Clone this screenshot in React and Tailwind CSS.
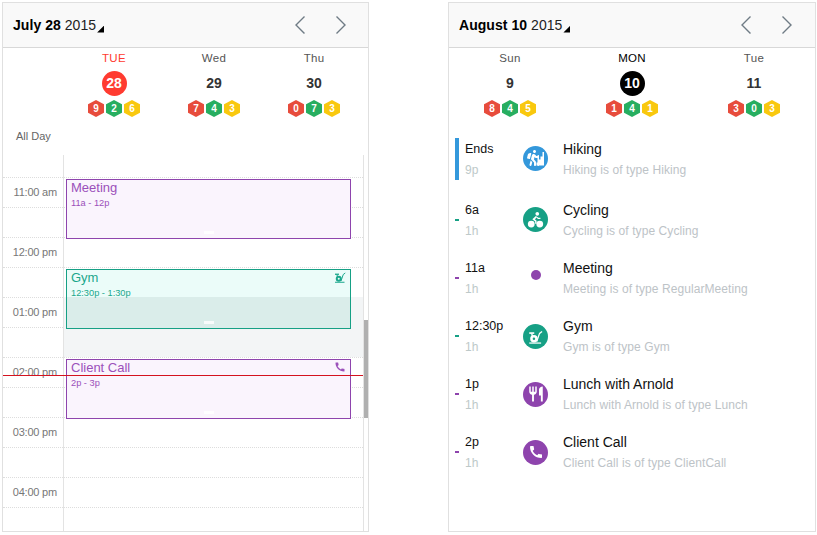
import { FaHiking } from "react-icons/fa";
import { MdCall, MdRestaurant } from "react-icons/md";

const leftDays = [
  { name: "TUE", num: 28, counts: [9, 2, 6], today: "bg-[#ff3b30]", label: "text-[#ff3b30]" },
  { name: "Wed", num: 29, counts: [7, 4, 3] },
  { name: "Thu", num: 30, counts: [0, 7, 3] },
];

const rightDays = [
  { name: "Sun", num: 9, counts: [8, 4, 5] },
  { name: "MON", num: 10, counts: [1, 4, 1], today: "bg-black", label: "text-black" },
  { name: "Tue", num: 11, counts: [3, 0, 3] },
];

const hexColors = ["bg-[#e74c3c]", "bg-[#27ae60]", "bg-[#f9c80e]"];

const hours = [
  "", "11:00 am", "", "12:00 pm", "", "01:00 pm", "", "02:00 pm", "", "03:00 pm", "", "04:00 pm", "", "",
];

function GymBike({ className }) {
  return (
    <svg viewBox="0 0 24 24" className={className} fill="none" stroke="currentColor">
      <path d="M2 22.5h19" strokeWidth="2" />
      <path d="M2 6.5h8" strokeWidth="2.6" />
      <path d="M6 7l1 5" strokeWidth="2.2" />
      <path d="M14 20l4.5-13 4-3" strokeWidth="2" />
      <path d="M9.5 9.5a6 6 0 1 1 0 12a6 6 0 1 1 0-12z M9.5 13.5a2 2 0 1 0 0 4a2 2 0 1 0 0-4z" fill="currentColor" fillRule="evenodd" stroke="none" />
    </svg>
  );
}

function CyclistIcon({ className }) {
  return (
    <svg viewBox="0 0 24 24" className={className} fill="currentColor">
      <circle cx="14.5" cy="4" r="2.6" />
      <path d="M12.5 7l-5 4.5 4 3.2v3.3h2v-4.4l-2.4-2 2.6-2.4 1.6 2h3.7V9.4h-2.8z" />
      <circle cx="6" cy="18.5" r="4.8" />
      <circle cx="18" cy="18.5" r="4.8" />
    </svg>
  );
}

function HikingStairs() {
  return (
    <svg viewBox="0 0 25 25" className="w-[25px] h-[25px]" fill="white">
      <path d="M13.5 19.5v-3h2v-3h2v-3h2V6h1.5v13.5z" />
    </svg>
  );
}

function Hex({ value, color }) {
  return (
    <div
      className={`w-4 h-[17px] flex items-center justify-center text-white text-[10px] font-bold ${color} [clip-path:polygon(50%_0,100%_25%,100%_75%,50%_100%,0_75%,0_25%)]`}
    >
      {value}
    </div>
  );
}

function DayColumn({ day }) {
  return (
    <div className="flex flex-col items-center">
      <div className={`mt-[3px] h-[14px] leading-[14px] text-[11.5px] tracking-[0.3px] ${day.label || "text-[#555]"}`}>{day.name}</div>
      <div
        className={`mt-[6px] w-[25px] h-[25px] rounded-full flex items-center justify-center text-[14px] font-bold ${
          day.today ? `${day.today} text-white` : "text-[#333]"
        }`}
      >
        {day.num}
      </div>
      <div className="mt-[4px] flex gap-[2px]">
        {day.counts.map((c, i) => (
          <Hex key={i} value={c} color={hexColors[i]} />
        ))}
      </div>
    </div>
  );
}

function Header({ bold, year, arrows }) {
  return (
    <div className="h-[45px] shrink-0 flex items-center bg-[#f9f9f9] border-b border-[#d8d8d8]">
      <div className="relative ml-[10px] text-[14px] tracking-[0.05px] text-[#222]">
        <span className="font-bold text-black">{bold}</span> {year}
        <span className="absolute left-[100%] ml-[1px] top-[11px] w-[7px] h-[7px] bg-black [clip-path:polygon(100%_0,100%_100%,0_100%)]" />
      </div>
      <div className={`ml-auto flex gap-[31px] text-[#6f7b85] ${arrows}`}>
        <svg viewBox="0 0 10 18" className="w-[10px] h-[18px]" fill="none" stroke="currentColor" strokeWidth="1.4">
          <path d="M9.5 .5L1 9l8.5 8.5" />
        </svg>
        <svg viewBox="0 0 10 18" className="w-[10px] h-[18px]" fill="none" stroke="currentColor" strokeWidth="1.4">
          <path d="M.5 .5L9 9 .5 17.5" />
        </svg>
      </div>
    </div>
  );
}

function CalEvent({ title, time, border, bg, text, top, icon, shade }) {
  return (
    <div className={`absolute left-[63px] w-[285px] h-[60px] border overflow-hidden ${border} ${bg} ${top}`}>
      {shade && <div className={`absolute left-0 right-0 top-[27px] bottom-0 ${shade}`} />}
      <div className={`relative pl-[4px] ${text}`}>
        <div className="text-[13px] leading-[16px]">{title}</div>
        <div className="mt-[1px] text-[9.25px] leading-[12px]">{time}</div>
      </div>
      {icon && <div className={`absolute right-[4px] top-[1px] ${text}`}>{icon}</div>}
      <div className="absolute left-[137px] bottom-[4px] w-[10px] h-[3px] bg-white/80" />
    </div>
  );
}

function DayPanel() {
  return (
    <div className="w-[367px] h-[530px] flex flex-col border border-[#e0e0e0]">
      <Header bold="July 28" year="2015" arrows="mr-[22px]" />
      <div className="h-[107px] shrink-0 flex">
        <div className="w-[61px] flex items-end pl-[13px] pb-[12px] text-[11px] leading-[14px] text-[#666]">All Day</div>
        {leftDays.map((d) => (
          <div key={d.name} className="w-[100px]">
            <DayColumn day={d} />
          </div>
        ))}
      </div>
      <div className="relative flex-1 overflow-hidden">
        {hours.map((h, i) => (
          <div
            key={i}
            className={`flex w-[360px] border-b border-dotted border-[#ddd] ${
              i === 0 || i === hours.length - 1 ? "h-[23px]" : "h-[30px]"
            }`}
          >
            <div className="w-[60px] pr-[6px] text-right text-[11px] leading-[29px] text-[#777] tracking-[-0.2px]">{h}</div>
          </div>
        ))}
        <div className="absolute left-[60px] top-0 bottom-0 border-l border-[#e3e3e3]" />
        <div className="absolute left-[360px] top-0 bottom-0 border-l border-[#e3e3e3]" />
        <div className="absolute left-[61px] w-[299px] top-[142px] h-[60px] bg-[#f3f5f6]" />
        <CalEvent
          title="Meeting"
          time="11a - 12p"
          top="top-[24px]"
          border="border-[#8e44ad]"
          bg="bg-[#faf4fd]"
          text="text-[#9b50ba]"
        />
        <CalEvent
          title="Gym"
          time="12:30p - 1:30p"
          top="top-[114px]"
          border="border-[#16a085]"
          bg="bg-[#ebfcf9]"
          text="text-[#1aa78c]"
          shade="bg-[#daedea]"
          icon={<GymBike className="w-[12px] h-[12px]" />}
        />
        <CalEvent
          title="Client Call"
          time="2p - 3p"
          top="top-[204px]"
          border="border-[#8e44ad]"
          bg="bg-[#faf4fd]"
          text="text-[#9b50ba]"
          icon={<MdCall className="w-[12px] h-[12px]" />}
        />
        <div className="absolute left-0 w-[360px] top-[220px] h-px bg-[#d4121f]" />
        <div className="absolute left-[361px] w-[4px] top-[165px] h-[98px] bg-[#b0b0b0]" />
      </div>
    </div>
  );
}

const agenda = [
  {
    start: "Ends", dur: "9p", title: "Hiking", sub: "Hiking is of type Hiking", bar: "h-[42px] w-[4px] bg-[#3498db]", circle: "bg-[#3498db]", icon: (
      <div className="relative w-[25px] h-[25px] flex items-center justify-center">
        <FaHiking className="w-[14px] h-[16px] mr-[5px] text-white" />
        <div className="absolute inset-0"><HikingStairs /></div>
      </div>
    ), iconMt: "-mt-[2px]", rowMt: "mt-0",
  },
  {
    start: "6a", dur: "1h", title: "Cycling", sub: "Cycling is of type Cycling", bar: "h-[2px] w-[4px] bg-[#16a085]", circle: "bg-[#16a085]", icon: <CyclistIcon className="w-[17px] h-[17px] text-white" />, iconMt: "-mt-[2px]", rowMt: "mt-[19px]",
  },
  {
    start: "11a", dur: "1h", title: "Meeting", sub: "Meeting is of type RegularMeeting", bar: "h-[2px] w-[4px] bg-[#8e44ad]", dot: true, iconMt: "-mt-[6px]", rowMt: "mt-[16px]",
  },
  {
    start: "12:30p", dur: "1h", title: "Gym", sub: "Gym is of type Gym", bar: "h-[2px] w-[4px] bg-[#16a085]", circle: "bg-[#16a085]", icon: <GymBike className="w-[15px] h-[15px] text-white" />, iconMt: "-mt-0", rowMt: "mt-[16px]",
  },
  {
    start: "1p", dur: "1h", title: "Lunch with Arnold", sub: "Lunch with Arnold is of type Lunch", bar: "h-[2px] w-[4px] bg-[#8e44ad]", circle: "bg-[#8e44ad]", icon: <MdRestaurant className="w-[18px] h-[18px] text-white" />, iconMt: "-mt-0", rowMt: "mt-[16px]",
  },
  {
    start: "2p", dur: "1h", title: "Client Call", sub: "Client Call is of type ClientCall", bar: "h-[2px] w-[4px] bg-[#8e44ad]", circle: "bg-[#8e44ad]", icon: <MdCall className="w-[16px] h-[16px] text-white" />, iconMt: "-mt-0", rowMt: "mt-[16px]",
  },
];

function AgendaPanel() {
  return (
    <div className="w-[368px] h-[530px] flex flex-col border border-[#e0e0e0]">
      <Header bold="August 10" year="2015" arrows="mr-[23px]" />
      <div className="h-[90px] shrink-0 grid grid-cols-3">
        {rightDays.map((d) => (
          <DayColumn key={d.name} day={d} />
        ))}
      </div>
      {agenda.map((row) => (
        <div key={row.title} className={`h-[42px] flex items-center ml-[6px] ${row.rowMt}`}>
          <div className={`shrink-0 ${row.bar}`} />
          <div className="w-[58px] ml-[6px] shrink-0 h-[42px] pt-[4px]">
            <div className="text-[12.5px] leading-[14px] text-[#111]">{row.start}</div>
            <div className="mt-[7px] text-[12px] leading-[14px] text-[#bdc9c9]">{row.dur}</div>
          </div>
          <div className={`w-[25px] h-[25px] shrink-0 flex items-center justify-center ${row.iconMt}`}>
            {row.dot ? (
              <div className="w-[10px] h-[10px] rounded-full bg-[#8e44ad]" />
            ) : (
              <div className={`w-[25px] h-[25px] rounded-full flex items-center justify-center ${row.circle}`}>{row.icon}</div>
            )}
          </div>
          <div className="ml-[15px] h-[42px] pt-[3px]">
            <div className="text-[14px] leading-[16px] text-[#111]">{row.title}</div>
            <div className="mt-[6px] text-[12px] leading-[14px] tracking-[0.08px] text-[#bdc3c7]">{row.sub}</div>
          </div>
        </div>
      ))}
    </div>
  );
}

export default function App() {
  return (
    <div className="w-[817px] h-[535px] bg-white pt-[2px] pl-[2px] flex gap-[79px] font-['Liberation_Sans',Arial,sans-serif]">
      <DayPanel />
      <AgendaPanel />
    </div>
  );
}
